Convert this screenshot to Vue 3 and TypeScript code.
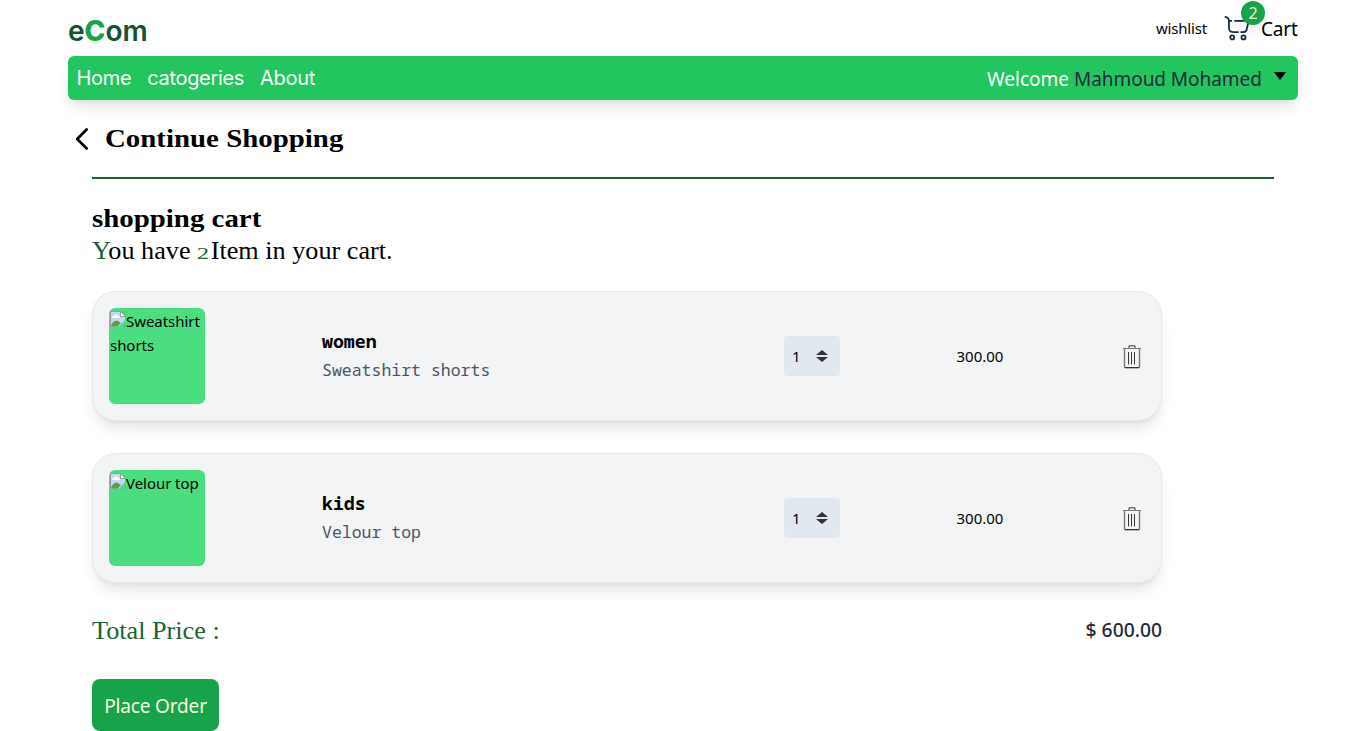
<script setup lang="ts">
import { ref, computed } from 'vue'

interface CartItem {
  id: number
  category: string
  title: string
  quantity: number
  price: number
}

const items = ref<CartItem[]>([
  { id: 1, category: 'women', title: 'Sweatshirt shorts', quantity: 1, price: 300 },
  { id: 2, category: 'kids', title: 'Velour top', quantity: 1, price: 300 },
])

const total = computed(() => items.value.reduce((sum, item) => sum + item.price * item.quantity, 0))

function removeItem(id: number): void {
  items.value = items.value.filter((item) => item.id !== id)
}
</script>

<template>
  <div class="page">
    <header class="top">
      <a class="logo">e<b>C</b>om</a>
      <div class="links">
        <a class="wishlist">wishlist</a>
        <a class="cart">
          <span class="cart-icon">
            <svg width="28" height="28" viewBox="0 0 28 28" fill="none" stroke="#1c274c" stroke-width="1.8" stroke-linecap="round">
              <path d="M2.5 2.8l.7.3c1.9.7 2.6 1.2 2.8 3.2M5.9 6.8h2.4M5.9 6.5v5.2c0 5.2.5 6.4 4.8 6.4h4.4M18.1 18.1h2c2.2 0 3-.4 3.6-2.7l1.3-5.6c.5-2.3 0-3-2.5-3H12" />
              <circle cx="9.2" cy="23.4" r="2" />
              <circle cx="20.5" cy="23.4" r="2" />
            </svg>
            <span class="badge"><span class="count">{{ items.length }}</span></span>
          </span>
          <span class="cart-label">Cart</span>
        </a>
      </div>
    </header>

    <nav class="nav">
      <div class="menu">
        <a class="home">Home</a>
        <a class="categories">catogeries</a>
        <a class="about">About</a>
      </div>
      <div class="user">
        <span class="welcome">Welcome</span>
        <span class="name">Mahmoud Mohamed</span>
        <svg class="caret" width="12" height="8" viewBox="0 0 12 8"><path d="M0 0h12L6 8z" /></svg>
      </div>
    </nav>

    <a class="back">
      <svg width="14" height="22" viewBox="0 0 14 22" fill="none" stroke="#000" stroke-width="2.6" stroke-linecap="round" stroke-linejoin="round">
        <path d="M11.7 1.5L2.2 11l9.5 9.5" />
      </svg>
      <span class="wide">Continue Shopping</span>
    </a>

    <main class="content">
      <h1 class="title"><span class="wide">shopping cart</span></h1>
      <p class="summary"><span class="roomy"><i>Y</i>ou have <i class="digit">{{ items.length }}</i>Item in your cart.</span></p>

      <section class="list">
        <article v-for="item in items" :key="item.id" class="card">
          <div class="thumb">
            <svg width="16" height="16" viewBox="0 0 16 16">
              <path d="M.5 .5h10l5 5v3L9 15.5H.5z" fill="#c5d7f5" />
              <path d="M2 7c0-2 1.5-2.6 2.5-2.4C5 3 8 3 8.3 4.8 9.6 4.8 10 6 9.6 7z" fill="#fff" />
              <path d="M1 15c1-4 4-6 7-5l3 2.2-3 2.8z" fill="#56a43b" />
              <path d="M8 15.5H.5V.5h10l5 5V9M15.5 13v2.5H13" fill="none" stroke="#999" />
              <path d="M10.5 .5v5h5z" fill="#fff" stroke="#999" />
            </svg>{{ item.title }}
          </div>
          <div class="info">
            <div class="category"><span>{{ item.category }}</span></div>
            <div class="product"><span>{{ item.title }}</span></div>
          </div>
          <div class="qty">
            <span>{{ item.quantity }}</span>
            <svg width="12" height="12" viewBox="0 0 12 12" fill="#333"><path d="M6 0l6 5H0zM0 7h12l-6 5z" /></svg>
          </div>
          <div class="price"><span>{{ item.price.toFixed(2) }}</span></div>
          <button class="remove" aria-label="Remove item" @click="removeItem(item.id)">
            <svg width="20" height="24" viewBox="0 0 20 24" fill="none" stroke="#333">
              <path d="M1 3.5h18" stroke="#777" />
              <path d="M7 3V.8h6V3" />
              <path d="M2.5 3.5v18.2q0 1 1 1h13q1 0 1-1V3.5" stroke="#777" stroke-width="1.4" />
              <path d="M3 22.5h14M6.5 7v12.5M9.5 7v12.5M12.5 7v12.5" />
            </svg>
          </button>
        </article>
      </section>

      <div class="total">
        <span class="total-label"><span class="roomy">Total Price :</span></span>
        <span class="total-value">$ {{ total.toFixed(2) }}</span>
      </div>
      <button class="order"><span>Place Order</span></button>
    </main>
  </div>
</template>

<style>
body {
  margin: 0;
  background: #fff;
  overflow: hidden;
}
</style>

<style scoped>
* {
  box-sizing: border-box;
}
.page {
  width: 1366px;
  height: 731px;
  padding: 0 68px;
  overflow: hidden;
  font: 16px/24px "Noto Sans", sans-serif;
  color: #000;
  white-space: nowrap;
}
.top {
  display: flex;
  justify-content: space-between;
  height: 56px;
}
.logo {
  padding-top: 14px;
  font: 600 28px/35px Inter, sans-serif;
  color: #14532d;
}
.logo b {
  font-weight: 800;
  color: #16a34a;
}
.links {
  display: flex;
}
.wishlist {
  padding-top: 16px;
  width: 67px;
  font-size: 15px;
  letter-spacing: -0.2px;
}
.cart {
  display: flex;
}
.cart-icon {
  position: relative;
  width: 38px;
  padding-top: 14px;
}
.badge {
  position: absolute;
  left: 18px;
  top: 1px;
  width: 24px;
  height: 24px;
  border-radius: 50%;
  background: #16a34a;
  color: #fef9c3;
  text-align: center;
  line-height: 24px;
  box-shadow: 0 10px 15px -3px rgb(0 0 0 / 0.1);
}
.cart-label {
  padding-top: 17px;
  width: 37px;
  font-size: 19px;
  letter-spacing: -0.2px;
}
.nav {
  display: flex;
  justify-content: space-between;
  height: 44px;
  padding: 0 12px 0 8px;
  border-radius: 6px;
  background: #22c55e;
  box-shadow: 0 10px 15px -3px rgb(0 0 0 / 0.1), 0 4px 6px -4px rgb(0 0 0 / 0.1);
}
.menu {
  display: flex;
  gap: 16px;
  padding-left: 0.5px;
  font: 20px/44px Inter, sans-serif;
  letter-spacing: -0.32px;
  color: #fff;
}
.user {
  display: flex;
  font-size: 19px;
  line-height: 46px;
}
.welcome {
  width: 87px;
  color: #fff;
}
.name {
  width: 200px;
  letter-spacing: -0.05px;
  color: #1f2937;
}
.caret {
  margin-top: 16px;
}
.back {
  display: flex;
  align-items: center;
  height: 77px;
  padding-left: 7px;
  gap: 16px;
  font: bold 25px/32px "Liberation Serif", serif;
}
.content {
  padding: 0 24px;
}
.title {
  margin: 0;
  padding-top: 24px;
  border-top: 2px solid #166534;
  font: bold 25px/32px "Liberation Serif", serif;
}
.wide,
.roomy {
  display: inline-block;
  transform: scaleX(1.155);
  transform-origin: 0 50%;
}
.summary {
  margin: 0;
  font: 25px/32px "Liberation Serif", serif;
}
.roomy {
  transform: scaleX(1.048);
}
.summary i {
  font-style: normal;
  color: #166534;
}
.summary .digit {
  display: inline-block;
  width: 13px;
  font-size: 17.5px;
  line-height: 20px;
  transform: scaleX(1.35);
  transform-origin: 0 50%;
}
.list {
  display: grid;
  gap: 32px;
  width: 1070px;
  margin-top: 24px;
}
.card {
  display: flex;
  align-items: center;
  height: 130px;
  padding: 16px;
  border: 1px solid #e5e7eb;
  border-radius: 24px;
  background: #f3f4f6;
  box-shadow: 0 10px 15px -3px rgb(0 0 0 / 0.1), 0 4px 6px -4px rgb(0 0 0 / 0.1);
}
.thumb {
  width: 96px;
  height: 96px;
  padding: 1px;
  border-radius: 6px;
  background: #4ade80;
  font-size: 15px;
  letter-spacing: -0.05px;
  white-space: normal;
}
.thumb svg {
  vertical-align: 0;
}
.info {
  width: 462px;
  margin-left: 117px;
  font-family: "Noto Sans Mono", "DejaVu Sans Mono", monospace;
}
.category {
  margin-top: -1px;
  font-size: 18.2px;
  line-height: 28px;
  font-weight: bold;
}
.product {
  margin-top: 1px;
  font-size: 16.5px;
  line-height: 28px;
  color: #4b5563;
}
.qty {
  display: flex;
  align-items: center;
  justify-content: space-between;
  width: 56px;
  height: 40px;
  padding: 0 12px 0 8px;
  border-radius: 4px;
  background: #e2e8f0;
  font-size: 15px;
}
.price {
  width: 166px;
  margin-left: 116px;
  padding-left: 0.5px;
  font-size: 15px;
}
.remove {
  display: flex;
  padding: 0;
  border: 0;
  background: none;
}
.remove svg {
  margin-top: 1px;
}
.total {
  display: flex;
  justify-content: space-between;
  width: 1070px;
  margin-top: 32px;
  line-height: 32px;
}
.total-label {
  font-family: "Liberation Serif", serif;
  font-size: 25px;
  color: #166534;
}
.total-value {
  font-weight: 500;
  font-size: 19.3px;
  line-height: 30px;
  color: #1f2937;
}
.order {
  display: block;
  width: 127px;
  height: 52px;
  margin-top: 32px;
  padding: 2px 0 0;
  border: 0;
  border-radius: 8px;
  background: #16a34a;
  color: #fefce8;
  font: 19px/28px "Noto Sans", sans-serif;
  letter-spacing: -0.15px;
}
</style>
